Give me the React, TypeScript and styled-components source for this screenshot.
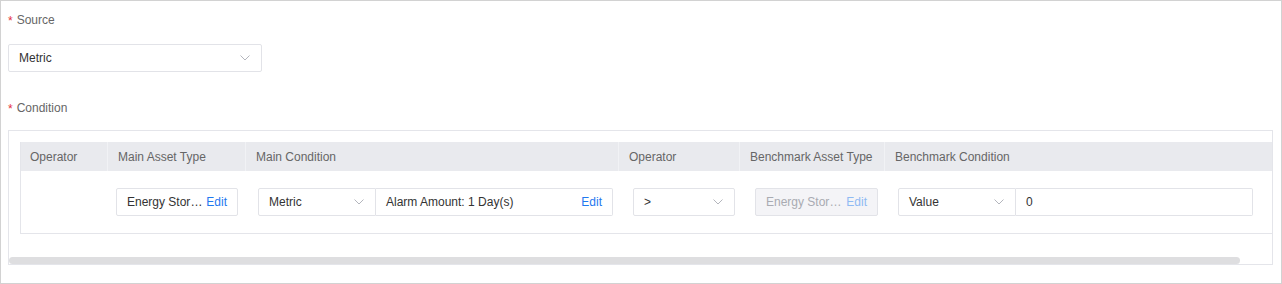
import styled, { createGlobalStyle } from 'styled-components'

const GlobalStyle = createGlobalStyle`
    html, body {
        margin: 0;
        padding: 0;
        background: #fff;
    }
    body {
        font-family: 'Liberation Sans', Arial, sans-serif;
        font-size: 12px;
        color: #333;
    }
    * {
        box-sizing: border-box;
    }
`

const Page = styled.div`
    width: 1282px;
    height: 284px;
    border: 1px solid #d2d2d2;
    padding: 11px 9px 0 7px;
    display: flex;
    flex-direction: column;
`

const Label = styled.div<{ $gap: number }>`
    height: 16px;
    line-height: 16px;
    color: #666;
    display: flex;
    align-items: center;
    gap: 4px;
    margin-bottom: ${(p) => p.$gap}px;
    &:before {
        content: '*';
        color: #e5323e;
        font-size: 12px;
        transform: translateY(1px);
    }
`

const Select = styled.div<{ $w: number; $joined?: boolean }>`
    width: ${(p) => p.$w}px;
    height: 28px;
    flex: none;
    border: 1px solid #e2e3e8;
    border-radius: ${(p) => (p.$joined ? '2px 0 0 2px' : '2px')};
    background: #fff;
    display: flex;
    align-items: center;
    justify-content: space-between;
    padding: 0 11px 0 10px;
    color: #333;
`

const Chevron = () => (
    <svg
        width='10'
        height='6'
        viewBox='0 0 10 6'
    >
        <polyline
            points='0.5,0.5 5,5 9.5,0.5'
            fill='none'
            stroke='#b4b6bd'
            strokeWidth='1'
        />
    </svg>
)

const SourceSelect = styled(Select)`
    margin-bottom: 28px;
`

const ConditionBox = styled.div`
    width: 1265px;
    height: 135px;
    border: 1px solid #e4e5ea;
    overflow: hidden;
    display: flex;
    flex-direction: column;
`

const Viewport = styled.div`
    padding: 11px 0 0 11px;
    height: 126px;
    overflow: hidden;
`

// headless browser hides native scrollbars, so the bar is drawn
const ScrollThumb = styled.div`
    width: 1231px;
    height: 7px;
    flex: none;
    background: #dedee0;
    border-radius: 4px;
`

const Table = styled.div`
    width: 1282px;
    display: grid;
    grid-template-columns: 86px 138px 373px 121px 145px 418px;
    border-left: 1px solid #e4e5ea;
    border-bottom: 1px solid #e4e5ea;
`

const HeadCell = styled.div<{ $first?: boolean }>`
    height: 29px;
    background: #e9eaee;
    color: #666;
    padding-left: ${(p) => (p.$first ? 9 : 10)}px;
    display: flex;
    align-items: center;
    border-left: ${(p) => (p.$first ? 'none' : '1px solid #f1f2f5')};
`

const BodyCell = styled.div<{ $pl: number }>`
    height: 62px;
    padding-left: ${(p) => p.$pl}px;
    display: flex;
    align-items: center;
`

const Field = styled.div<{ $w: number; $disabled?: boolean; $joined?: boolean }>`
    width: ${(p) => p.$w}px;
    height: 28px;
    flex: none;
    border: 1px solid #e2e3e8;
    border-left: ${(p) => (p.$joined ? 'none' : '1px solid #e2e3e8')};
    border-radius: ${(p) => (p.$joined ? '0 2px 2px 0' : '2px')};
    background: ${(p) => (p.$disabled ? '#f4f4f7' : '#fff')};
    color: ${(p) => (p.$disabled ? '#a9abb2' : '#333')};
    display: flex;
    align-items: center;
    justify-content: space-between;
    padding: 0 10px;
`

const Ellipsis = styled.span<{ $w: number }>`
    width: ${(p) => p.$w}px;
    white-space: nowrap;
    overflow: hidden;
    text-overflow: ellipsis;
`

const EditLink = styled.span<{ $disabled?: boolean }>`
    color: ${(p) => (p.$disabled ? '#8fbaf3' : '#1f79ef')};
    cursor: pointer;
`

const Group = styled.div`
    display: flex;
`

const App = () => {
    return (
        <>
            <GlobalStyle />
            <Page>
                <Label $gap={16}>Source</Label>
                <SourceSelect $w={254}>
                    Metric
                    <Chevron />
                </SourceSelect>
                <Label $gap={14}>Condition</Label>
                <ConditionBox>
                    <Viewport>
                        <Table>
                            <HeadCell $first>Operator</HeadCell>
                            <HeadCell>Main Asset Type</HeadCell>
                            <HeadCell>Main Condition</HeadCell>
                            <HeadCell>Operator</HeadCell>
                            <HeadCell>Benchmark Asset Type</HeadCell>
                            <HeadCell>Benchmark Condition</HeadCell>

                            <BodyCell $pl={0} />
                            <BodyCell $pl={9}>
                                <Field $w={122}>
                                    <Ellipsis $w={78}>Energy Storage</Ellipsis>
                                    <EditLink>Edit</EditLink>
                                </Field>
                            </BodyCell>
                            <BodyCell $pl={13}>
                                <Group>
                                    <Select
                                        $w={118}
                                        $joined
                                    >
                                        Metric
                                        <Chevron />
                                    </Select>
                                    <Field
                                        $w={237}
                                        $joined
                                    >
                                        Alarm Amount: 1 Day(s)
                                        <EditLink>Edit</EditLink>
                                    </Field>
                                </Group>
                            </BodyCell>
                            <BodyCell $pl={15}>
                                <Select $w={102}>
                                    &gt;
                                    <Chevron />
                                </Select>
                            </BodyCell>
                            <BodyCell $pl={16}>
                                <Field
                                    $w={123}
                                    $disabled
                                >
                                    <Ellipsis $w={78}>Energy Storage</Ellipsis>
                                    <EditLink $disabled>Edit</EditLink>
                                </Field>
                            </BodyCell>
                            <BodyCell $pl={14}>
                                <Group>
                                    <Select
                                        $w={118}
                                        $joined
                                    >
                                        Value
                                        <Chevron />
                                    </Select>
                                    <Field
                                        $w={237}
                                        $joined
                                    >
                                        0
                                    </Field>
                                </Group>
                            </BodyCell>
                        </Table>
                    </Viewport>
                    <ScrollThumb />
                </ConditionBox>
            </Page>
        </>
    )
}

export default App
